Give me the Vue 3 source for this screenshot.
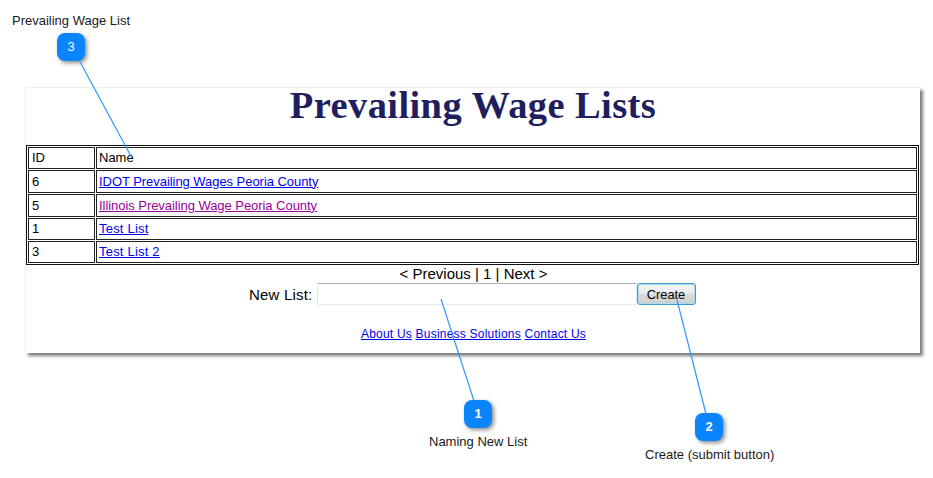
<script setup>
const rows = [
  { id: '6', name: 'IDOT Prevailing Wages Peoria County', tall: true },
  { id: '5', name: 'Illinois Prevailing Wage Peoria County', visited: true, tall: true },
  { id: '1', name: 'Test List', short: true },
  { id: '3', name: 'Test List 2', short: true },
]
const callouts = [
  { n: 3, cls: 'c3', x1: 79, y1: 60, x2: 132, y2: 158 },
  { n: 1, cls: 'c1', x1: 474, y1: 401, x2: 441, y2: 299 },
  { n: 2, cls: 'c2', x1: 706, y1: 414, x2: 677, y2: 300 },
]
</script>

<template>
  <div class="page">
    <div class="top-caption">Prevailing Wage List</div>

    <section class="card">
      <h1 class="title">Prevailing Wage Lists</h1>
      <table class="grid">
        <tbody>
          <tr>
            <td class="id">ID</td>
            <td>Name</td>
          </tr>
          <tr v-for="r in rows" :key="r.id" :class="{ tall: r.tall, short: r.short }">
            <td class="id">{{ r.id }}</td>
            <td><a href="#" :class="{ visited: r.visited }">{{ r.name }}</a></td>
          </tr>
        </tbody>
      </table>
      <div class="pager">&lt; Previous | 1 | Next &gt;</div>
      <form class="new-list" @submit.prevent>
        <label for="nl">New List:</label>
        <input id="nl" type="text" />
        <button type="submit">Create</button>
      </form>
      <nav class="foot">
        <a href="#">About Us</a> <a href="#">Business Solutions</a> <a href="#">Contact Us</a>
      </nav>
    </section>

    <svg class="lines" width="933" height="478" viewBox="0 0 933 478">
      <line
        v-for="c in callouts"
        :key="c.n"
        :x1="c.x1"
        :y1="c.y1"
        :x2="c.x2"
        :y2="c.y2"
        stroke="#3097ff"
        stroke-width="1.2"
      />
    </svg>

    <div v-for="c in callouts" :key="c.n" class="bubble" :class="c.cls">{{ c.n }}</div>
    <div class="caption cap1">Naming New List</div>
    <div class="caption cap2">Create (submit button)</div>
  </div>
</template>

<style scoped>
.page {
  position: relative;
  width: 933px;
  height: 478px;
  overflow: hidden;
  background: #fff;
  font-family: "Liberation Sans", Arial, sans-serif;
  color: #000;
}
.top-caption {
  position: absolute;
  left: 12px;
  top: 13px;
  font-size: 13px;
  line-height: 15px;
  color: #1a1a1a;
}
.card {
  position: absolute;
  left: 25px;
  top: 87px;
  width: 895px;
  height: 266px;
  box-sizing: border-box;
  padding: 0 0 0 1px;
  background: #fff;
  border-top: 1px solid #eee;
  border-left: 1px solid #f2f2f2;
  box-shadow: 3px 3px 3px #7c7c7c;
}
.title {
  margin: 0 0 0 -1px;
  height: 57px;
  text-align: center;
  font-family: "Liberation Serif", Georgia, serif;
  font-weight: 700;
  font-size: 38.5px;
  line-height: 34px;
  letter-spacing: 0.4px;
  color: #1f1f60;
}
.grid {
  width: 893px;
  margin-left: -1px;
  border-collapse: separate;
  border-spacing: 1px;
  border: 1px solid #111;
  font-size: 13px;
  line-height: 16px;
}
.grid td {
  box-sizing: border-box;
  height: 22px;
  padding: 0 2px;
  border: 1px solid #222;
  vertical-align: middle;
}
.grid tr.tall td {
  height: 23px;
  letter-spacing: -0.05px;
}
.grid tr.short td {
  letter-spacing: 0.2px;
}
.grid td.id {
  width: 67px;
  padding-left: 3px;
}
a {
  color: #0000ee;
  text-decoration: underline;
}
a.visited {
  color: #990099;
}
.pager {
  text-align: center;
  font-size: 15px;
  line-height: 18px;
}
.new-list {
  display: flex;
  align-items: center;
  height: 22px;
  padding-left: 222px;
  font-size: 15px;
  letter-spacing: 0.2px;
}
.new-list label {
  margin-right: 4px;
}
.new-list input {
  box-sizing: border-box;
  width: 320px;
  height: 22px;
  margin: 0;
  padding: 0 2px;
  background: #fff;
  border: 1px solid #e3e9ef;
  border-top-color: #abadb3;
  border-radius: 2px;
  outline: none;
}
.new-list button {
  box-sizing: border-box;
  width: 59px;
  height: 22px;
  padding: 0;
  font: 12.8px "Liberation Sans", Arial, sans-serif;
  color: #000;
  background: linear-gradient(#f4f4f4 0%, #ebebeb 48%, #dbdbdb 52%, #cfcfcf 100%);
  border: 1px solid #3c9cc8;
  border-radius: 3px;
  box-shadow: inset 0 0 1px 1px #a6dcf2;
}
.foot {
  margin-top: 22px;
  text-align: center;
  font-size: 12px;
  line-height: 14px;
  letter-spacing: 0.22px;
}
.lines {
  position: absolute;
  left: 0;
  top: 0;
  pointer-events: none;
}
.bubble {
  position: absolute;
  width: 28px;
  height: 28px;
  border-radius: 8px;
  background: #0a84ff;
  box-shadow: 2px 2px 4px #8c8c8c;
  color: #fff;
  font-size: 13px;
  line-height: 28px;
  text-align: center;
}
.c1, .c2 { font-weight: 700; }
.c3 { left: 57px; top: 33px; }
.c1 { left: 464px; top: 400px; }
.c2 { left: 695px; top: 413px; }
.caption {
  position: absolute;
  font-size: 13px;
  line-height: 15px;
  color: #1a1a1a;
}
.cap1 { left: 429px; top: 434px; }
.cap2 { left: 645px; top: 447px; }
</style>
